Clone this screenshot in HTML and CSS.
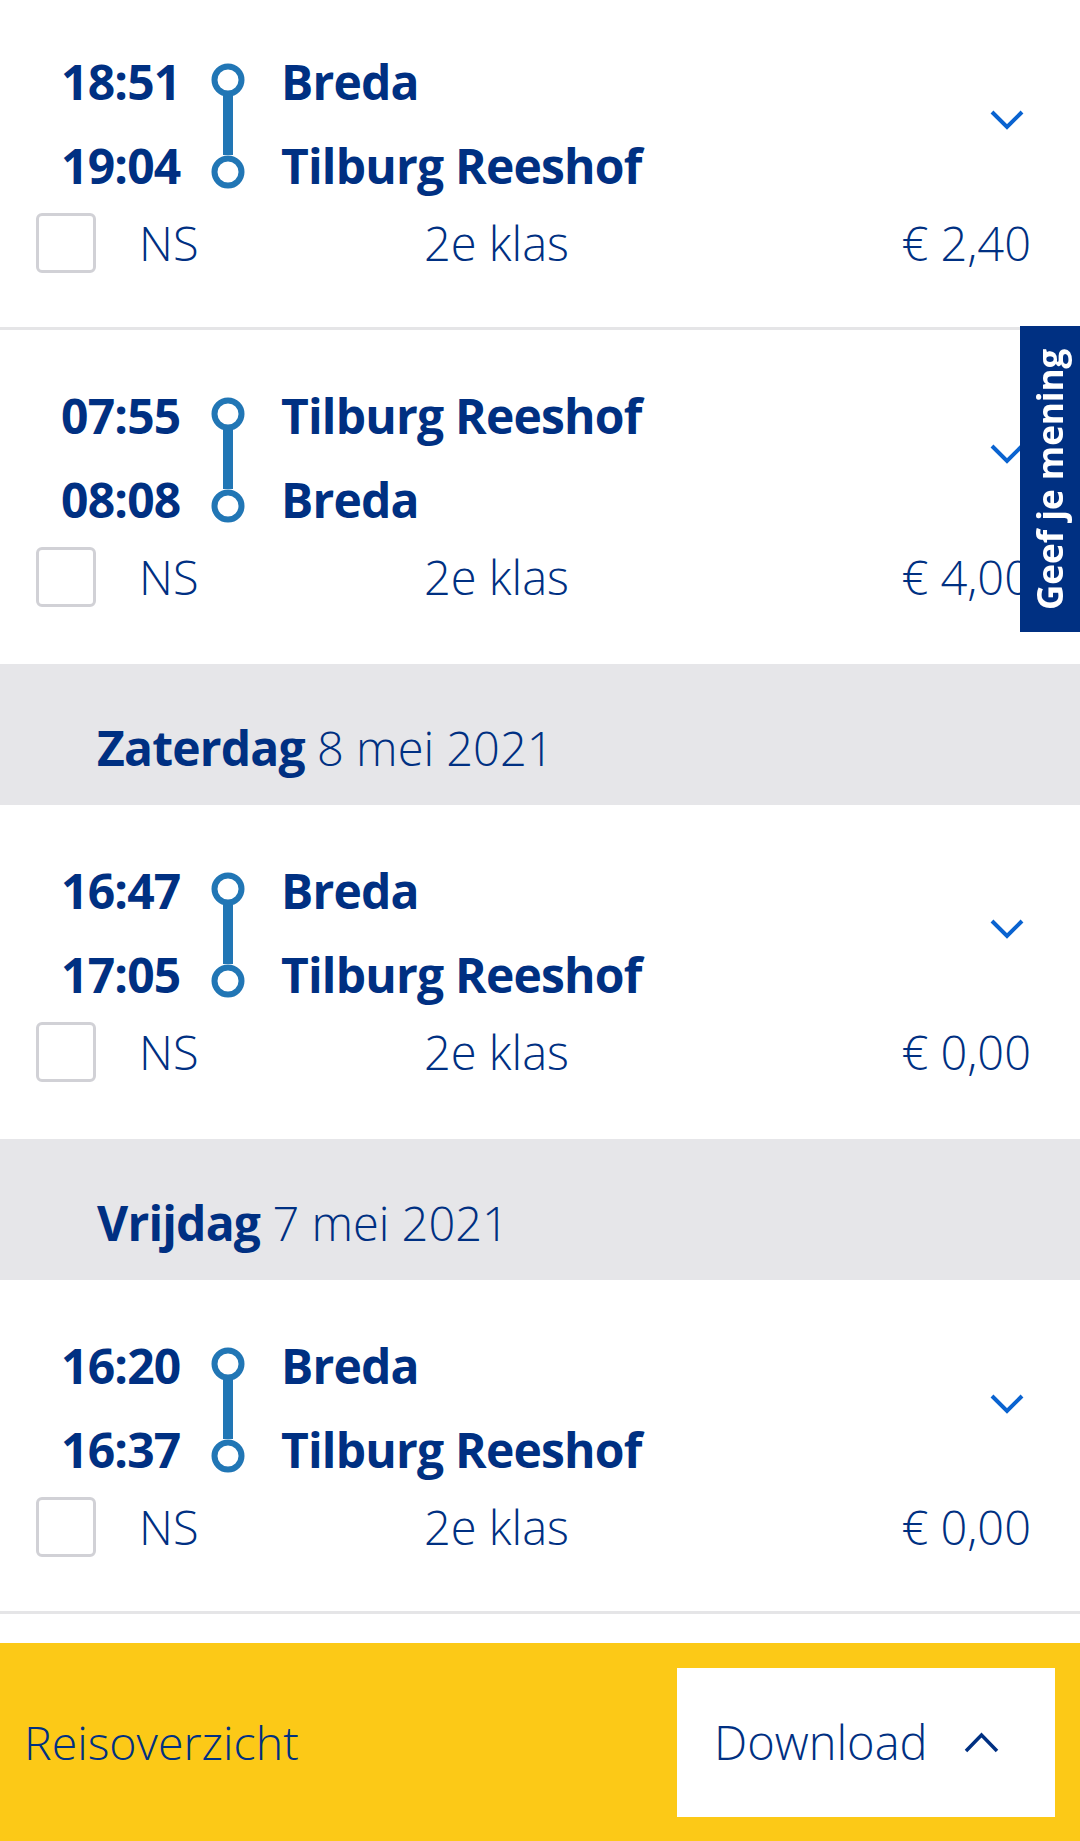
FILE: index.html
```html
<!DOCTYPE html>
<html lang="nl">
<head>
<meta charset="utf-8">
<title>Reisoverzicht</title>
<link rel="stylesheet" href="styles.css">
</head>
<body>
<div class="page">
  <main class="list">
    <div class="scroll">
      <section class="card">
        <div class="route">
          <span class="time t1">18:51</span>
          <svg class="line" viewBox="0 0 34 168" width="34" height="168"><rect x="12" y="55" width="10" height="60" fill="#2176b5"/><circle cx="17" cy="40" r="13.5" fill="#fff" stroke="#2176b5" stroke-width="6"/><circle cx="17" cy="132" r="13.5" fill="#fff" stroke="#2176b5" stroke-width="6"/></svg>
          <span class="station s1">Breda</span>
          <span class="time t2">19:04</span>
          <span class="station s2">Tilburg Reeshof</span>
          <svg class="chev" viewBox="0 0 34 20" width="34" height="20"><polyline points="2,2 17,17 32,2" fill="none" stroke="#0a63d0" stroke-width="4"/></svg>
        </div>
        <div class="meta">
          <span class="check"></span>
          <span class="op">NS</span>
          <span class="klas">2e klas</span>
          <span class="price">€ 2,40</span>
        </div>
      </section>
      <section class="card before-day">
        <div class="route">
          <span class="time t1">07:55</span>
          <svg class="line" viewBox="0 0 34 168" width="34" height="168"><rect x="12" y="55" width="10" height="60" fill="#2176b5"/><circle cx="17" cy="40" r="13.5" fill="#fff" stroke="#2176b5" stroke-width="6"/><circle cx="17" cy="132" r="13.5" fill="#fff" stroke="#2176b5" stroke-width="6"/></svg>
          <span class="station s1">Tilburg Reeshof</span>
          <span class="time t2">08:08</span>
          <span class="station s2">Breda</span>
          <svg class="chev" viewBox="0 0 34 20" width="34" height="20"><polyline points="2,2 17,17 32,2" fill="none" stroke="#0a63d0" stroke-width="4"/></svg>
        </div>
        <div class="meta">
          <span class="check"></span>
          <span class="op">NS</span>
          <span class="klas">2e klas</span>
          <span class="price">€ 4,00</span>
        </div>
      </section>
      <h2 class="day"><strong>Zaterdag</strong> 8 mei 2021</h2>
      <section class="card before-day">
        <div class="route">
          <span class="time t1">16:47</span>
          <svg class="line" viewBox="0 0 34 168" width="34" height="168"><rect x="12" y="55" width="10" height="60" fill="#2176b5"/><circle cx="17" cy="40" r="13.5" fill="#fff" stroke="#2176b5" stroke-width="6"/><circle cx="17" cy="132" r="13.5" fill="#fff" stroke="#2176b5" stroke-width="6"/></svg>
          <span class="station s1">Breda</span>
          <span class="time t2">17:05</span>
          <span class="station s2">Tilburg Reeshof</span>
          <svg class="chev" viewBox="0 0 34 20" width="34" height="20"><polyline points="2,2 17,17 32,2" fill="none" stroke="#0a63d0" stroke-width="4"/></svg>
        </div>
        <div class="meta">
          <span class="check"></span>
          <span class="op">NS</span>
          <span class="klas">2e klas</span>
          <span class="price">€ 0,00</span>
        </div>
      </section>
      <h2 class="day"><strong>Vrijdag</strong> 7 mei 2021</h2>
      <section class="card">
        <div class="route">
          <span class="time t1">16:20</span>
          <svg class="line" viewBox="0 0 34 168" width="34" height="168"><rect x="12" y="55" width="10" height="60" fill="#2176b5"/><circle cx="17" cy="40" r="13.5" fill="#fff" stroke="#2176b5" stroke-width="6"/><circle cx="17" cy="132" r="13.5" fill="#fff" stroke="#2176b5" stroke-width="6"/></svg>
          <span class="station s1">Breda</span>
          <span class="time t2">16:37</span>
          <span class="station s2">Tilburg Reeshof</span>
          <svg class="chev" viewBox="0 0 34 20" width="34" height="20"><polyline points="2,2 17,17 32,2" fill="none" stroke="#0a63d0" stroke-width="4"/></svg>
        </div>
        <div class="meta">
          <span class="check"></span>
          <span class="op">NS</span>
          <span class="klas">2e klas</span>
          <span class="price">€ 0,00</span>
        </div>
      </section>
      <section class="card"></section>
    </div>
  </main>
  <footer class="bar">
    <span class="bar-title">Reisoverzicht</span>
    <button class="download" type="button">
      <span>Download</span>
      <svg viewBox="0 0 35 21" width="35" height="21"><polyline points="2,19 17.5,3 33,19" fill="none" stroke="#003082" stroke-width="3.5"/></svg>
    </button>
  </footer>
  <a class="feedback" href="#">Geef je mening</a>
</div>
</body>
</html>
```

FILE: styles.css
```css
* { box-sizing: border-box; }

html, body {
  margin: 0;
  padding: 0;
  background: #ffffff;
}

body {
  font-family: "Open Sans", "Noto Sans", sans-serif;
  color: #003082;
}

.page {
  height: 1841px;
  display: flex;
  flex-direction: column;
  overflow: hidden;
}

.list {
  flex: 1;
  overflow: hidden;
}

.scroll {
  margin-top: -4px;
}

.card {
  height: 334px;
  border-bottom: 3px solid #e5e5e7;
  padding-top: 44px;
}

.card.before-day {
  border-bottom-color: #ffffff;
}

.route {
  display: grid;
  grid-template-columns: 150px 34px 1fr 34px;
  grid-template-rows: 84px 84px;
  padding: 0 56px 0 61px;
  align-items: center;
}

.time,
.station {
  font-size: 48px;
  font-weight: 700;
  line-height: 56px;
  letter-spacing: -0.8px;
}

.t1 { grid-column: 1; grid-row: 1; }
.t2 { grid-column: 1; grid-row: 2; }
.s1 { grid-column: 3; grid-row: 1; padding-left: 36px; }
.s2 { grid-column: 3; grid-row: 2; padding-left: 36px; }

.line {
  grid-column: 2;
  grid-row: 1 / span 2;
  align-self: start;
  display: block;
}

.chev {
  grid-column: 4;
  grid-row: 1 / span 2;
  align-self: center;
  margin-bottom: 8px;
  display: block;
}

.meta {
  display: flex;
  align-items: center;
  height: 70px;
  padding: 0 49px 0 36px;
  font-size: 47px;
  font-weight: 300;
  line-height: 56px;
}

.check {
  width: 60px;
  height: 60px;
  border: 3px solid #d1d1d6;
  border-radius: 6px;
  background: #fff;
  flex: none;
}

.op {
  width: 328px;
  padding-left: 43px;
  flex: none;
}

.klas {
  flex: none;
}

.price {
  margin-left: auto;
}

.day {
  margin: 0;
  height: 141px;
  padding: 56px 0 0 97px;
  background: #e6e6e9;
  font-size: 47px;
  font-weight: 300;
  line-height: 56px;
}

.day strong {
  font-size: 48px;
  font-weight: 700;
  letter-spacing: -0.8px;
}

.bar {
  flex: none;
  height: 198px;
  background: #fcc917;
  display: flex;
  align-items: center;
  padding: 0 25px 0 24px;
}

.bar-title {
  font-size: 46.5px;
  font-weight: 300;
  line-height: 56px;
}

.download {
  margin-left: auto;
  width: 378px;
  height: 149px;
  background: #ffffff;
  border: 0;
  border-radius: 0;
  display: flex;
  align-items: center;
  gap: 36px;
  padding: 0 0 0 37px;
  font-family: "Open Sans", "Noto Sans", sans-serif;
  font-size: 47px;
  font-weight: 300;
  color: #003082;
  line-height: 56px;
}

.download svg {
  display: block;
}

.feedback {
  position: fixed;
  top: 326px;
  right: 0;
  width: 60px;
  height: 306px;
  background: #003082;
  color: #ffffff;
  text-decoration: none;
  font-size: 35px;
  font-weight: 700;
  writing-mode: vertical-rl;
  transform: rotate(180deg);
  display: flex;
  align-items: center;
  justify-content: center;
  line-height: 60px;
}
```
